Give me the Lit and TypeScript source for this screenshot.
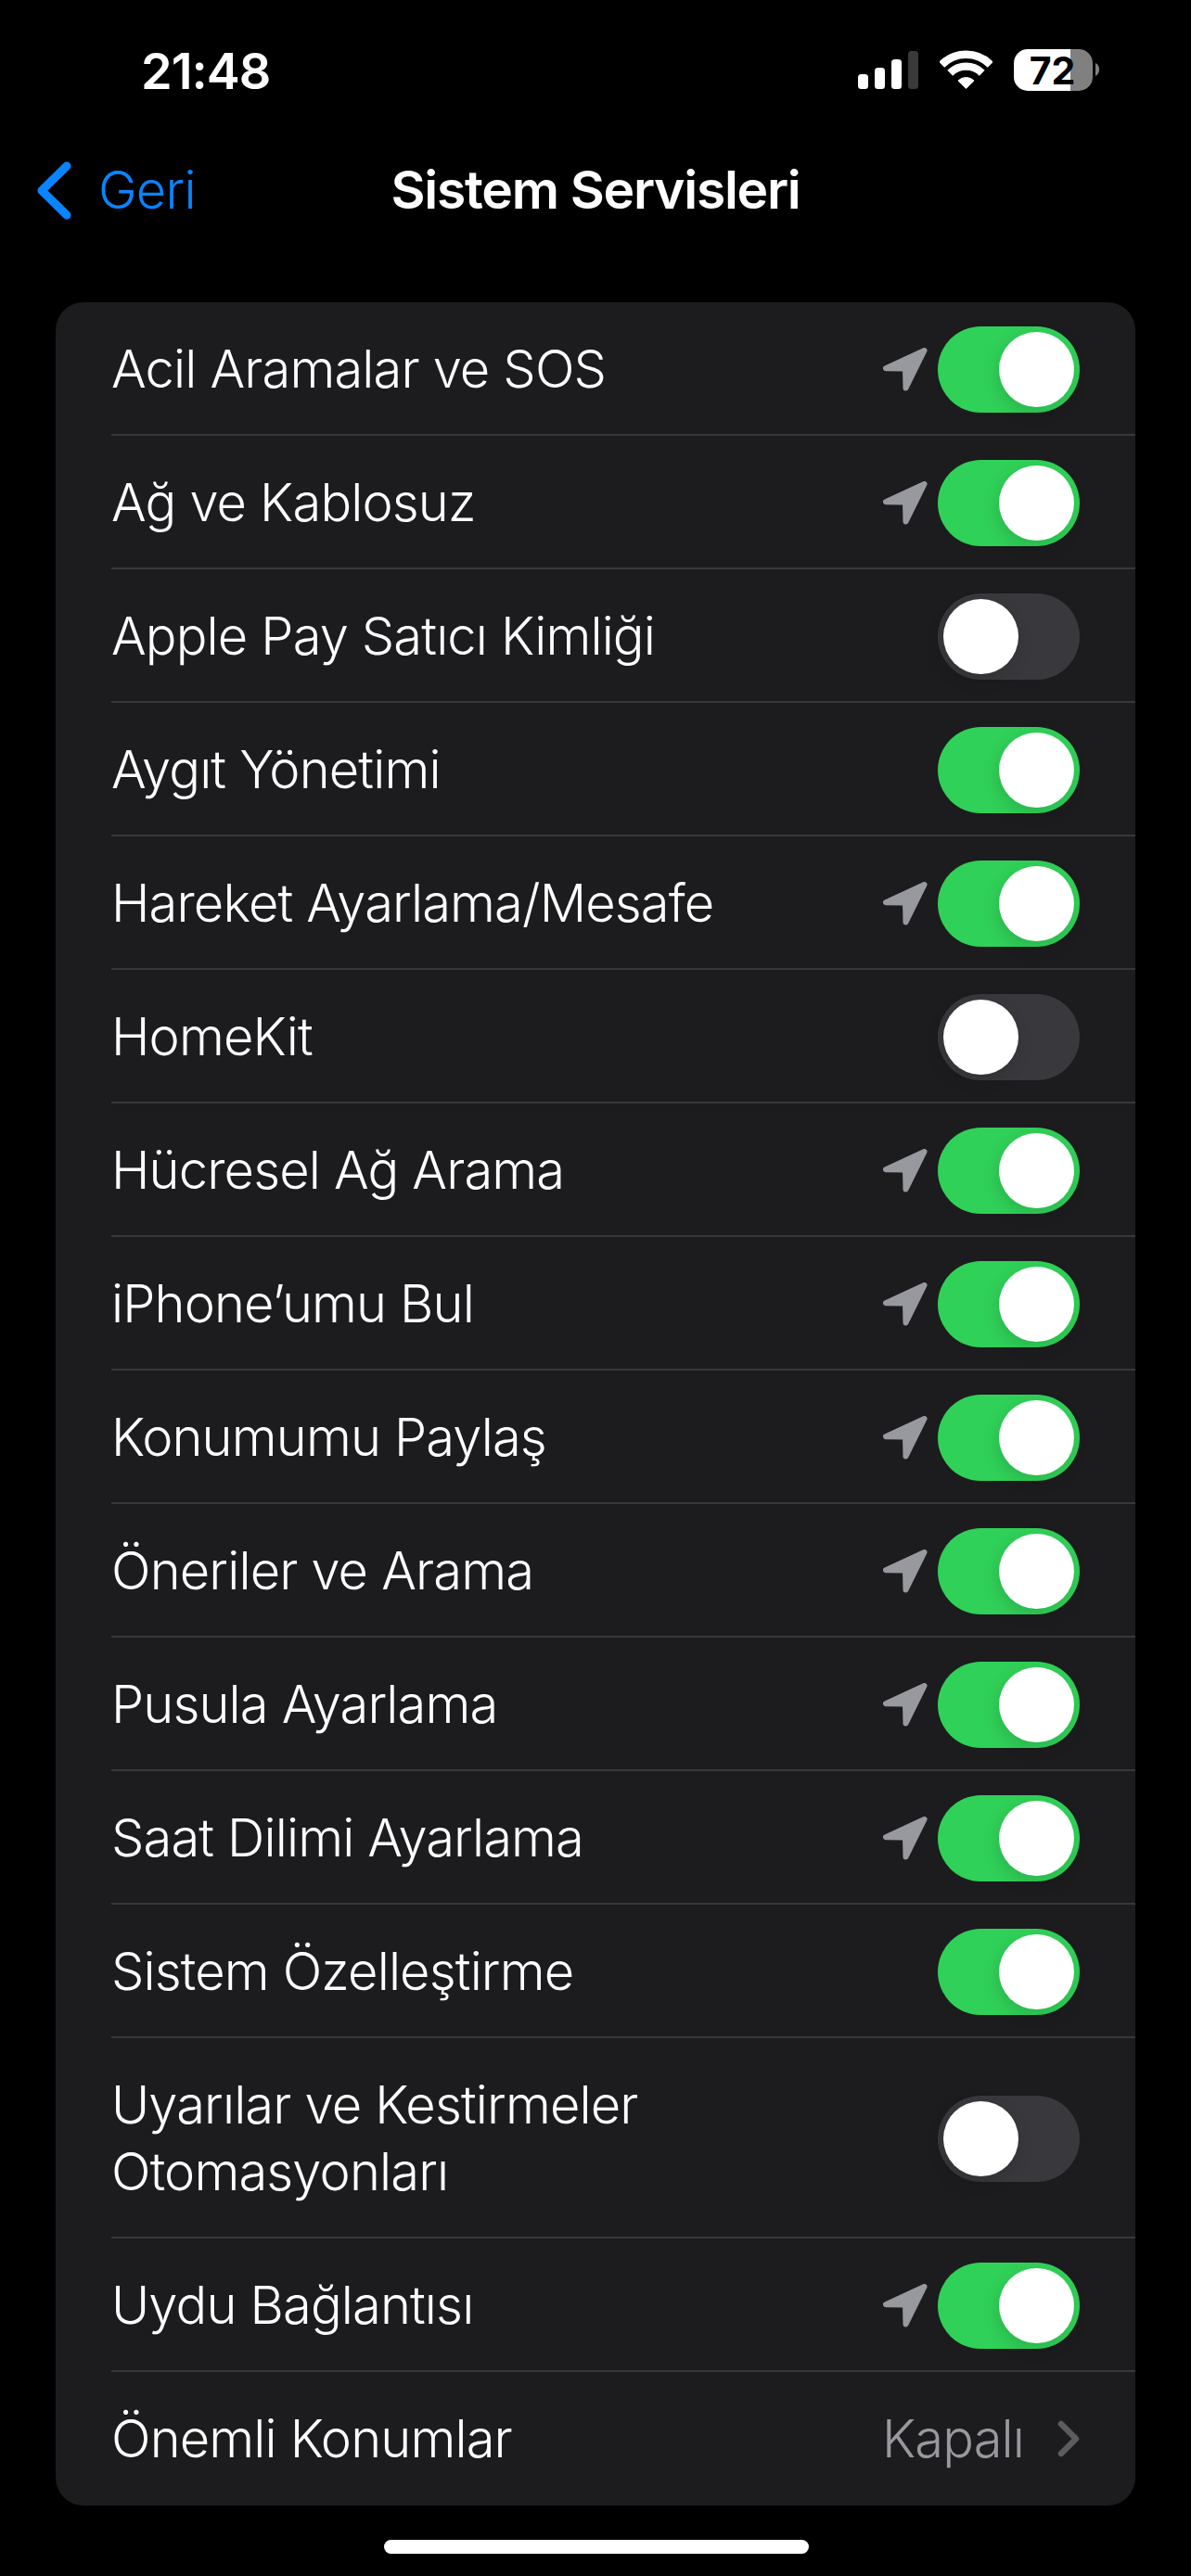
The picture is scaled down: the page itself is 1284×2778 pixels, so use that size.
import { LitElement, html, css, svg } from "lit";
import { customElement } from "lit/decorators.js";

type Row = { label: string[]; on?: boolean; loc?: boolean; value?: string };

const rows: Row[] = [
  { label: ["Acil Aramalar ve SOS"], on: true, loc: true },
  { label: ["Ağ ve Kablosuz"], on: true, loc: true },
  { label: ["Apple Pay Satıcı Kimliği"], on: false },
  { label: ["Aygıt Yönetimi"], on: true },
  { label: ["Hareket Ayarlama/Mesafe"], on: true, loc: true },
  { label: ["HomeKit"], on: false },
  { label: ["Hücresel Ağ Arama"], on: true, loc: true },
  { label: ["iPhone’umu Bul"], on: true, loc: true },
  { label: ["Konumumu Paylaş"], on: true, loc: true },
  { label: ["Öneriler ve Arama"], on: true, loc: true },
  { label: ["Pusula Ayarlama"], on: true, loc: true },
  { label: ["Saat Dilimi Ayarlama"], on: true, loc: true },
  { label: ["Sistem Özelleştirme"], on: true },
  { label: ["Uyarılar ve Kestirmeler", "Otomasyonları"], on: false },
  { label: ["Uydu Bağlantısı"], on: true, loc: true },
  { label: ["Önemli Konumlar"], value: "Kapalı" },
];

const locIcon = html`<svg class="loc" viewBox="0 0 48 47">
  <path d="M44.500 3 L3 22.300 L24 22.500 L24.500 43.500 Z" fill="#98989f" stroke="#98989f" stroke-width="6" stroke-linejoin="round"/>
</svg>`;

@customElement("app-root")
export class AppRoot extends LitElement {
  static styles = css`
    :host {
      display: block;
      width: 1284px;
      height: 2778px;
      background: #000;
      color: #fff;
      font-family: Inter, "Liberation Sans", sans-serif;
      position: relative;
      overflow: hidden;
    }
    .status {
      height: 140px;
      box-sizing: border-box;
      padding: 44px 97px 0 152px;
      display: flex;
      align-items: flex-start;
    }
    .time {
      font-size: 54px;
      font-weight: 600;
      line-height: 66px;
      letter-spacing: -1px;
      flex: 1;
    }
    .signal { width: 65px; height: 45px; margin: 9px 23px 0 0; }
    .wifi { width: 57px; height: 45px; margin: 9px 23px 0 0; }
    .battery { width: 94px; height: 61px; margin-top: 1px; }
    .battery text {
      font-family: Inter, "Liberation Sans", sans-serif;
      font-size: 41px;
      font-weight: 700;
    }
    .nav {
      height: 130px;
      display: grid;
      grid-template-columns: 1fr auto 1fr;
      align-items: center;
      padding-left: 40px;
      padding-right: 40px;
    }
    .back {
      display: flex;
      align-items: center;
      gap: 29px;
      color: #0a84ff;
      font-size: 56px;
      font-weight: 350;
      letter-spacing: -0.800px;
    }
    .chev { width: 37px; height: 63px; }
    .title {
      font-size: 57px;
      font-weight: 600;
      letter-spacing: -1.300px;
      margin-top: -1px;
    }
    .card {
      margin: 56px 60px 0;
      background: #1c1c1e;
      border-radius: 30px;
      overflow: hidden;
    }
    .row {
      display: block;
      padding-left: 60px;
    }
    .inner {
      box-sizing: border-box;
      display: flex;
      align-items: center;
      padding: 36px 60px 34px 0;
      border-bottom: 2px solid #38383a;
      font-size: 56px;
      font-weight: 350;
      line-height: 72px;
      letter-spacing: -0.850px;
    }
    .row:last-child .inner { border-bottom: none; padding-bottom: 36px; }
    .label { flex: 1; }
    .label div { white-space: nowrap; }
    .loc { width: 48px; height: 47px; margin: 1px 11px 0 0; }
    .toggle {
      width: 153px;
      height: 93px;
      margin: -10px 0 -11px;
      border-radius: 47px;
      background: #39393d;
      box-sizing: border-box;
      padding: 6px;
      display: flex;
      justify-content: flex-start;
    }
    .toggle.on { background: #30d158; justify-content: flex-end; }
    .knob {
      width: 81px;
      height: 81px;
      border-radius: 50%;
      background: #fff;
      box-shadow: -2px 6px 18px rgba(0, 0, 0, 0.14);
    }
    .value { color: #98989f; }
    .disc { width: 24px; height: 40px; margin-left: 36px; }
    .home {
      position: absolute;
      left: 414px;
      top: 2739px;
      width: 458px;
      height: 15px;
      border-radius: 8px;
      background: #fff;
    }
  `;

  private renderRow(r: Row) {
    return html`<div class="row"><div class="inner">
      <div class="label">${r.label.map((l) => html`<div>${l}</div>`)}</div>
      ${r.value
        ? html`<span class="value">${r.value}</span>
            <svg class="disc" viewBox="0 0 24 40"><path d="M4 4 L20 20 L4 36" fill="none" stroke="#5c5c60" stroke-width="6.500" stroke-linecap="round" stroke-linejoin="round"/></svg>`
        : html`${r.loc ? locIcon : ""}
            <div class="toggle ${r.on ? "on" : ""}"><div class="knob"></div></div>`}
    </div></div>`;
  }

  render() {
    return html`
      <div class="status">
        <div class="time">21:48</div>
        <svg class="signal" viewBox="0 0 65 45">
          <rect x="0" y="27" width="11" height="16" rx="3.500" fill="#fff"/>
          <rect x="18" y="20" width="11" height="23" rx="3.500" fill="#fff"/>
          <rect x="36" y="11" width="11" height="32" rx="3.500" fill="#fff"/>
          <rect x="54" y="2" width="11" height="41" rx="3.500" fill="#3a3a3a"/>
        </svg>
        <svg class="wifi" viewBox="0 0 57 45" fill="none" stroke="#fff">
          ${svg`<path d="M2.200 16.700 A37.250 37.250 0 0 1 54.800 16.700" stroke-width="8.500"/>
          <path d="M11.250 25.750 A24.400 24.400 0 0 1 45.750 25.750" stroke-width="8.200"/>
          <path d="M28.500 42.500 L20 34 A12.200 12.200 0 0 1 37 34 Z" fill="#fff" stroke-width="1" stroke-linejoin="round"/>`}
        </svg>
        <svg class="battery" viewBox="0 -8 94 61">
          <defs><clipPath id="b"><rect x="0" y="0" width="85" height="45" rx="15"/></clipPath></defs>
          <g clip-path="url(#b)">
            <rect x="0" y="0" width="61" height="45" fill="#fff"/>
            <rect x="61" y="0" width="24" height="45" fill="#808080"/>
          </g>
          <path d="M88 15 A8 8 0 0 1 88 29 Z" fill="#808080"/>
          <text x="41.500" y="37.500" text-anchor="middle" fill="#000">72</text>
        </svg>
      </div>
      <div class="nav">
        <div class="back">
          <svg class="chev" viewBox="0 0 37 63"><path d="M32 5 L5 31.500 L32 58" fill="none" stroke="#0a84ff" stroke-width="9" stroke-linecap="round" stroke-linejoin="round"/></svg>
          <span>Geri</span>
        </div>
        <div class="title">Sistem Servisleri</div>
        <div></div>
      </div>
      <div class="card">${rows.map((r) => this.renderRow(r))}</div>
      <div class="home"></div>
    `;
  }
}
